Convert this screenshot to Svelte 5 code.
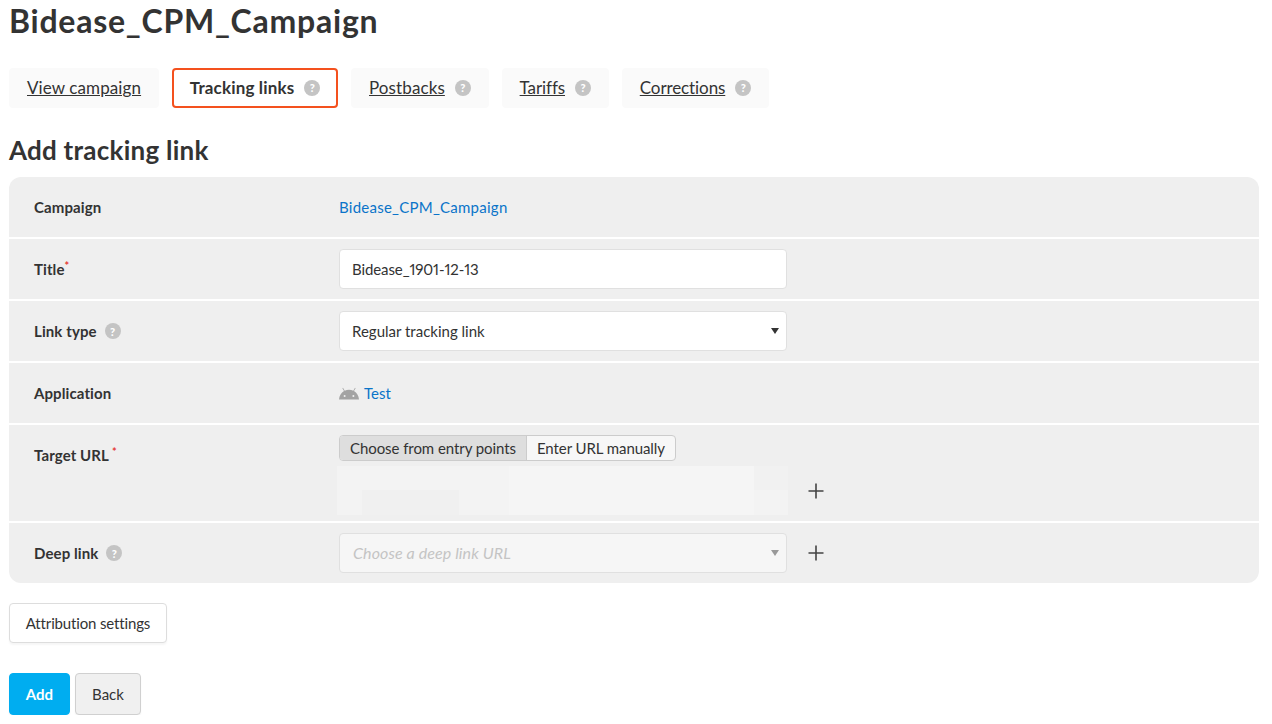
<script lang="ts">
  const tabs = [
    { label: "View campaign", help: false, active: false },
    { label: "Tracking links", help: true, active: true },
    { label: "Postbacks", help: true, active: false },
    { label: "Tariffs", help: true, active: false, narrow: true },
    { label: "Corrections", help: true, active: false, narrow: true },
  ];
</script>

{#snippet help()}
  <span class="help">?</span>
{/snippet}

{#snippet plus()}
  <svg class="plus" width="16" height="16" viewBox="0 0 16 16" aria-hidden="true">
    <path d="M8 0.5v15M0.5 8h15" stroke="#444" stroke-width="1.6" fill="none" />
  </svg>
{/snippet}

<div class="page">
  <h1>Bidease_CPM_Campaign</h1>

  <nav class="tabs">
    {#each tabs as tab}
      <div class="tab" class:active={tab.active} class:narrow={tab.narrow}>
        {#if tab.active}
          <strong>{tab.label}</strong>
        {:else}
          <a href="#top">{tab.label}</a>
        {/if}
        {#if tab.help}{@render help()}{/if}
      </div>
    {/each}
  </nav>

  <h2>Add tracking link</h2>

  <div class="panel">
    <div class="row">
      <div class="label">Campaign</div>
      <div class="value"><a class="link" href="#top">Bidease_CPM_Campaign</a></div>
    </div>

    <div class="row">
      <div class="label">Title<sup>*</sup></div>
      <div class="value"><div class="input nums">Bidease_1901-12-13</div></div>
    </div>

    <div class="row">
      <div class="label">Link type {@render help()}</div>
      <div class="value">
        <div class="input select">Regular tracking link<span class="caret"></span></div>
      </div>
    </div>

    <div class="row">
      <div class="label">Application</div>
      <div class="value app">
        <svg width="20" height="14" viewBox="0 0 20 14" aria-hidden="true">
          <path
            d="M0 13.5C0.3 9.8 2.2 6.7 5 5L3.4 2.2l.6-.4L5.7 4.7C7 4 8.5 3.7 10 3.7s3 .3 4.3 1l1.7-2.9.6.4L15 5c2.8 1.7 4.7 4.8 5 8.5z"
            fill="#a3a3a3"
          />
          <circle cx="5.6" cy="10" r="1" fill="#efefef" />
          <circle cx="14.4" cy="10" r="1" fill="#efefef" />
        </svg>
        <a class="link short" href="#top">Test</a>
      </div>
    </div>

    <div class="row target">
      <div class="label">Target URL <sup>*</sup></div>
      <div class="value">
        <div class="segmented">
          <span class="seg on">Choose from entry points</span>
          <span class="seg">Enter URL manually</span>
        </div>
        <div class="with-plus">
          <div class="skeleton"></div>
          {@render plus()}
        </div>
      </div>
    </div>

    <div class="row">
      <div class="label">Deep link {@render help()}</div>
      <div class="value with-plus">
        <div class="input select disabled"><span class="placeholder">Choose a deep link URL</span><span class="caret"></span></div>
        {@render plus()}
      </div>
    </div>
  </div>

  <button class="btn attribution">Attribution settings</button>

  <div class="actions">
    <button class="btn primary">Add</button>
    <button class="btn back">Back</button>
  </div>
</div>

<style>
  :global(body) {
    background: #fff;
    color: #333;
    font-family: "Lato", "Liberation Sans", sans-serif;
  }

  .page {
    padding: 0 13px 0 9px;
    font-size: 15px;
  }

  h1 {
    margin: 0;
    padding-top: 3px;
    font-size: 32px;
    letter-spacing: 0.75px;
    line-height: 36px;
    font-weight: 700;
  }

  .tabs {
    display: flex;
    margin-top: 29px;
    gap: 12.75px;
  }

  .tab {
    display: flex;
    align-items: center;
    gap: 10px;
    height: 40px;
    box-sizing: border-box;
    padding: 0 18px 1px;
    background: #fafafa;
    border-radius: 4px;
    font-size: 17px;
    letter-spacing: 0.1px;
  }

  .tab.narrow {
    letter-spacing: -0.1px;
  }

  .tab a {
    color: #333;
  }

  .tab.active {
    background: #fff;
    border: 2px solid #f4511e;
    padding: 0 16px 1px;
    letter-spacing: 0.15px;
  }

  h2 {
    margin: 25px 0 0;
    font-size: 26px;
    letter-spacing: 0.25px;
    line-height: 34px;
    font-weight: 700;
  }

  .panel {
    display: flex;
    flex-direction: column;
    gap: 2px;
    margin-top: 10px;
    border-radius: 12px;
    overflow: hidden;
  }

  .row {
    display: flex;
    align-items: center;
    background: #efefef;
    height: 60px;
  }

  .row.target {
    height: 96px;
    align-items: flex-start;
    padding-top: 10px;
    box-sizing: border-box;
  }

  .label {
    flex: none;
    width: 330px;
    padding-left: 25px;
    box-sizing: border-box;
    font-weight: 700;
    font-size: 15px;
    letter-spacing: 0.1px;
    display: flex;
    align-items: center;
    gap: 8px;
  }

  .target .label {
    padding-top: 11px;
    gap: 3px;
  }

  .label sup {
    color: #e53935;
    font-size: 11px;
    line-height: 1;
    margin: -8px 0 0 -8px;
  }

  .target .label sup {
    margin: -8px 0 0 0;
  }

  .link {
    color: #0a74c9;
    text-decoration: none;
    letter-spacing: 0.25px;
  }

  .link.short {
    letter-spacing: 0;
  }

  .input {
    position: relative;
    width: 448px;
    height: 40px;
    box-sizing: border-box;
    display: flex;
    align-items: center;
    padding: 0 12px 1px;
    background: #fff;
    border: 1px solid #e0e0e0;
    border-radius: 4px;
  }

  .nums {
    font-variant-numeric: proportional-nums;
    letter-spacing: -0.1px;
  }

  .caret {
    position: absolute;
    right: 7px;
    top: 16px;
    border: 4.5px solid transparent;
    border-top: 6px solid #333;
    border-bottom: 0;
  }

  .input.disabled {
    background: #f6f6f6;
    color: #c4c4c4;
    padding-left: 13px;
  }

  .placeholder {
    font-style: italic;
    font-size: 16px;
    letter-spacing: 0.1px;
  }

  .disabled .caret {
    border-top-color: #999;
  }

  .app {
    display: flex;
    align-items: center;
    gap: 5px;
  }

  .segmented {
    display: inline-flex;
    height: 26px;
    box-sizing: border-box;
    border: 1px solid #ccc;
    border-radius: 4px;
    overflow: hidden;
    background: #f7f7f7;
    letter-spacing: -0.07px;
  }

  .seg {
    display: flex;
    align-items: center;
    padding: 0 10px 1px;
  }

  .seg.on {
    background: #dedede;
    border-right: 1px solid #ccc;
  }

  .with-plus {
    display: flex;
    align-items: center;
    gap: 21px;
  }

  .target .with-plus {
    margin-top: 5px;
    gap: 20px;
  }

  .skeleton {
    width: 451px;
    height: 49px;
    margin-left: -2px;
    background:
      linear-gradient(90deg, #f3f3f3 0 172px, #f5f5f5 172px 417px, #f1f1f1 417px) 0 0 / 100% 24px no-repeat,
      linear-gradient(90deg, #f3f3f3 0 25px, #f0f0f0 25px 122px, #f3f3f3 122px 172px, #f5f5f5 172px 417px, #f3f3f3 417px);
  }

  .plus {
    flex: none;
  }

  .help {
    display: inline-flex;
    align-items: center;
    justify-content: center;
    width: 16px;
    height: 16px;
    border-radius: 50%;
    background: #c4c4c4;
    color: #fff;
    font-size: 11px;
    font-weight: 900;
    letter-spacing: 0;
  }

  .btn {
    display: block;
    box-sizing: border-box;
    font: inherit;
    font-size: 15px;
    color: #333;
    background: #fff;
    border: 1px solid #ddd;
    border-radius: 4px;
    box-shadow: 0 2px 2px rgba(0, 0, 0, 0.04);
    padding: 0 0 1px;
  }

  .attribution {
    margin-top: 20px;
    width: 158px;
    height: 40px;
    letter-spacing: -0.15px;
  }

  .actions {
    display: flex;
    gap: 5px;
    margin-top: 30px;
  }

  .primary {
    width: 61px;
    height: 42px;
    background: #00adf0;
    border-color: #00adf0;
    color: #fff;
    font-weight: 700;
  }

  .back {
    width: 66px;
    height: 42px;
    background: #f0f0f0;
    border-color: #d0d0d0;
  }
</style>
